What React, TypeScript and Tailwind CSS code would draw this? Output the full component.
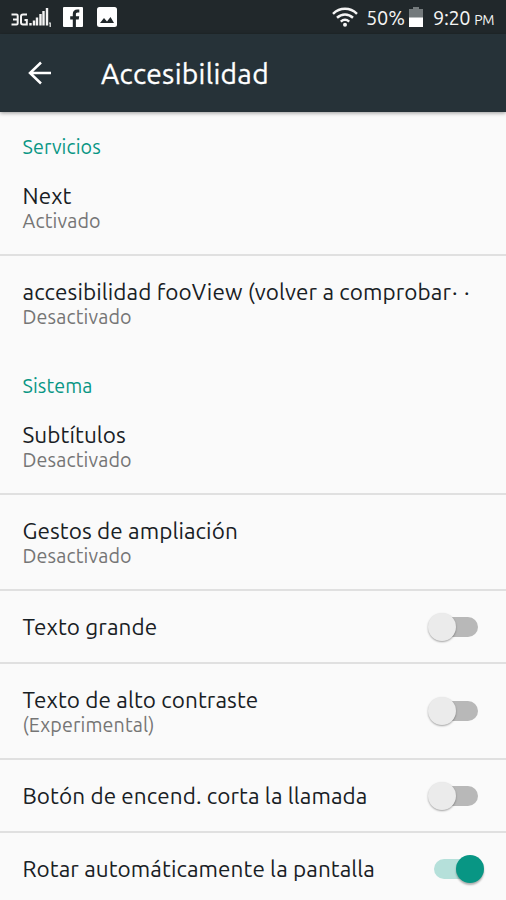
import React from "react";

function Switch({ on = false }: { on?: boolean }) {
  return on ? (
    <span className="relative mr-[22px] block h-7 w-[50px] shrink-0">
      <span className="absolute left-0 top-1 h-5 w-[44px] rounded-full bg-[#b5e0da]" />
      <span className="absolute right-0 top-0 size-7 rounded-full bg-[#089684] shadow-[0_2px_2px_rgba(0,0,0,0.3)]" />
    </span>
  ) : (
    <span className="relative mr-7 block h-7 w-[50px] shrink-0">
      <span className="absolute right-0 top-1 h-5 w-[44px] rounded-full bg-[#b8b8b8]" />
      <span className="absolute left-0 top-0 size-7 rounded-full bg-[#ebebeb] shadow-[0_1px_2px_rgba(0,0,0,0.35)]" />
    </span>
  );
}

type RowProps = {
  title: string;
  dots?: boolean;
  sub?: string;
  toggle?: "on" | "off";
  last?: boolean;
};

function Row({ title, dots, sub, toggle, last }: RowProps) {
  return (
    <div
      className={`flex shrink-0 items-center justify-between border-b-2 pl-[22.5px] ${sub ? "h-24" : "h-[73px]"} ${
        last ? "border-transparent" : "border-[#e0e0e0]"
      }`}
    >
      <div className={`whitespace-nowrap ${sub ? "pt-px" : "pt-px"}`}>
        <div className="text-[22.5px] leading-[26px] tracking-[0.08px] text-[#182024]">
          {title}
          {dots && <span className="ml-px tracking-[6.5px]">··</span>}
        </div>
        {sub && <div className="text-[19.7px] leading-6 tracking-[0.13px] text-[#757575]">{sub}</div>}
      </div>
      {toggle && <Switch on={toggle === "on"} />}
    </div>
  );
}

function Heading({ children, className = "" }: { children: React.ReactNode; className?: string }) {
  return (
    <h2 className={`flex shrink-0 items-end pl-[22.5px] text-[19.7px] leading-6 tracking-[0.1px] text-[#089684] ${className}`}>
      {children}
    </h2>
  );
}

function StatusBar() {
  return (
    <div className="flex h-[34px] shrink-0 items-center bg-[#21282b] text-[#f4f4f4]">
      <svg className="ml-[10px]" width="42" height="22" viewBox="0 0 42 22" fill="none">
        <path d="M1.500 8.500h5q1.200 0 1.200 1.200v7.500q0 1.300-1.200 1.300h-5M3 13.500h4.500M17 8.500h-4q-2 0-2 2V16.500q0 2 2 2h3.800v-4.500h-2.300" stroke="#f4f4f4" strokeWidth="2" />
        <path d="M20.500 19.500v-2.500M24 19.500v-5M27 19.500v-8M30.500 19.500V8M33.500 19.500V5M37 19.500V2" stroke="#f4f4f4" strokeWidth="2.400" />
        <path d="M39 17h1.200v4" stroke="#f4f4f4" strokeWidth="1.200" />
      </svg>
      <svg className="ml-[11px]" width="20" height="20" viewBox="0 0 20 20">
        <rect width="20" height="20" rx="1" fill="#fff" />
        <path d="M9.800 20v-7.500H7.200V9.300h2.600V7c0-2.900 1.700-4.500 4.500-4.500h2v3h-1.500c-1.400 0-1.900.7-1.900 1.900v1.900h3.300l-.5 3.200h-2.800V20z" fill="#21282b" />
      </svg>
      <svg className="ml-[14px]" width="20" height="20" viewBox="0 0 20 20">
        <rect width="20" height="20" rx="2.500" fill="#fff" />
        <path d="M3 16l4-5 3 3.500 3.500-4.500L17 16z" fill="#21282b" />
      </svg>
      <svg className="ml-[215px]" width="26" height="20" viewBox="0 0 26 20" fill="none" stroke="#f4f4f4" strokeWidth="2.500">
        <path d="M1 6.800C8 .2 18 .2 25 6.800M5 10.800c4.800-4.300 11.200-4.300 16 0M8.800 14.600c2.500-2.200 5.900-2.200 8.400 0" />
        <circle cx="13" cy="17.700" r="2" fill="#f4f4f4" stroke="none" />
      </svg>
      <span className="ml-[8px] w-[43px] whitespace-nowrap pt-px text-[20px] tracking-[-0.2px]">50%</span>
      <svg width="14" height="20" viewBox="0 0 14 20">
        <path d="M0 2h4V0h6v2h4v9H0z" fill="#747a7c" />
        <path d="M0 10.500h14V20H0z" fill="#fff" />
      </svg>
      <span className="ml-[10px] whitespace-nowrap pt-px text-[20px] tracking-[-0.4px]">
        9:20<span className="ml-[4px] text-[14px]">PM</span>
      </span>
    </div>
  );
}

export default function App() {
  return (
    <div className="flex h-[900px] w-[506px] flex-col overflow-hidden bg-[#fafafa] font-['Ubuntu','Noto_Sans',sans-serif]">
      <StatusBar />
      <header className="z-10 flex h-[78px] shrink-0 items-center bg-[#263238] text-white shadow-[0_1px_4px_rgba(0,0,0,0.4)]">
        <svg className="ml-7" width="24" height="24" viewBox="0 0 24 24" fill="none" stroke="#fff" strokeWidth="2.500">
          <path d="M13 1.500L2 12l11 10.500M1.500 12H23" />
        </svg>
        <h1 className="ml-[49px] pt-0.5 text-[28.2px] leading-9 tracking-[0.3px] [-webkit-text-stroke:0.3px_#fff]">
          Accesibilidad
        </h1>
      </header>
      <Heading className="h-12 pb-px">Servicios</Heading>
      <Row title="Next" sub="Activado" />
      <Row title="accesibilidad fooView (volver a comprobar" dots sub="Desactivado" last />
      <Heading className="h-[47px] pb-px">Sistema</Heading>
      <Row title="Subtítulos" sub="Desactivado" />
      <Row title="Gestos de ampliación" sub="Desactivado" />
      <Row title="Texto grande" toggle="off" />
      <Row title="Texto de alto contraste" sub="(Experimental)" toggle="off" />
      <Row title="Botón de encend. corta la llamada" toggle="off" />
      <Row title="Rotar automáticamente la pantalla" toggle="on" last />
    </div>
  );
}
